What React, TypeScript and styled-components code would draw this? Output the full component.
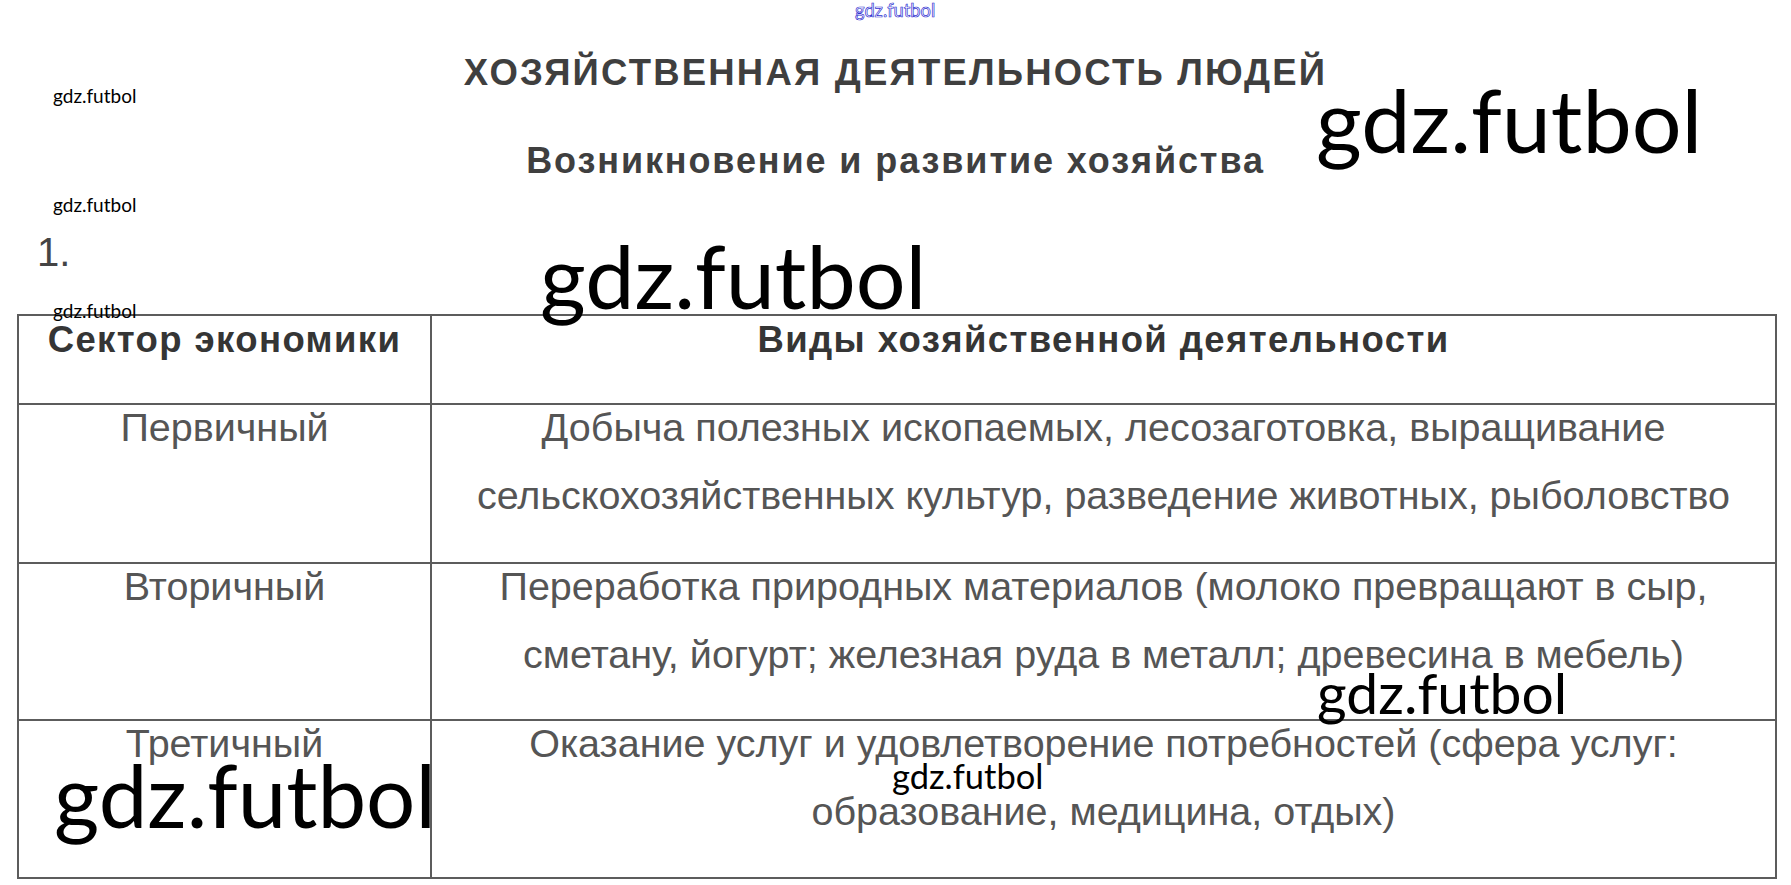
import React from 'react';
import styled, { createGlobalStyle } from 'styled-components';

const GlobalStyle = createGlobalStyle`
  body {
    margin: 0;
    background: #fff;
  }
`;

const Page = styled.div`
  position: relative;
  width: 1791px;
  height: 885px;
  overflow: hidden;
  background: #fff;
  font-family: "Liberation Sans", Arial, sans-serif;
  color: #4d4d4d;
`;

const Heading = styled.header`
  display: flex;
  flex-direction: column;
  align-items: center;
  padding-top: 55px;
`;

const Title = styled.h1`
  margin: 0;
  font-size: 36.5px;
  line-height: 36px;
  font-weight: 700;
  letter-spacing: 2.2px;
  color: #3f3f3f;
`;

const Subtitle = styled.h2`
  margin: 52px 0 0;
  font-size: 36px;
  line-height: 36px;
  font-weight: 700;
  letter-spacing: 1.9px;
  color: #3f3f3f;
`;

const TaskNumber = styled.div`
  margin: 54px 0 0 37px;
  font-size: 40px;
  line-height: 38px;
  color: #444;
`;

const Table = styled.table`
  margin: 43px 0 0 17px;
  width: 1760px;
  border-collapse: collapse;
  table-layout: fixed;
`;

const Row = styled.tr<{ $h: number }>`
  height: ${(p) => p.$h}px;
`;

const HeadCell = styled.th<{ $w?: number }>`
  ${(p) => (p.$w ? `width: ${p.$w}px;` : '')}
  border: 2px solid #5c5c5c;
  padding: 7px 6px 0;
  vertical-align: top;
  text-align: center;
  font-size: 36.5px;
  line-height: 34px;
  font-weight: 700;
  letter-spacing: 1.4px;
  color: #353535;
`;

const Cell = styled.td`
  border: 2px solid #5c5c5c;
  padding: 0 6px;
  vertical-align: top;
  text-align: center;
`;

const CellText = styled.p`
  margin: -12px 0 0;
  font-size: 39.5px;
  line-height: 68px;
  color: #555;
`;

const Mark = styled.span<{ $size: number; $x: number; $y: number }>`
  position: absolute;
  left: ${(p) => p.$x}px;
  top: ${(p) => p.$y}px;
  font-family: Lato, "Open Sans", sans-serif;
  font-size: ${(p) => p.$size}px;
  line-height: 1;
  color: #000;
  white-space: nowrap;
  pointer-events: none;
`;

const OutlineMark = styled(Mark)`
  color: #fff;
  -webkit-text-stroke: 0.7px #3232d2;
`;

const rows = [
  {
    sector: 'Первичный',
    kinds:
      'Добыча полезных ископаемых, лесозаготовка, выращивание сельскохозяйственных культур, разведение животных, рыболовство',
    h: 159,
  },
  {
    sector: 'Вторичный',
    kinds:
      'Переработка природных материалов (молоко превращают в сыр, сметану, йогурт; железная руда в металл; древесина в мебель)',
    h: 157,
  },
  {
    sector: 'Третичный',
    kinds:
      'Оказание услуг и удовлетворение потребностей (сфера услуг: образование, медицина, отдых)',
    h: 158,
  },
];

const marks = [
  { size: 19, x: 53, y: 86 },
  { size: 19, x: 53, y: 195 },
  { size: 19, x: 53, y: 301 },
  { size: 88, x: 1316, y: 75 },
  { size: 88, x: 540, y: 231 },
  { size: 87, x: 54, y: 751 },
  { size: 57, x: 1317, y: 664 },
  { size: 34.5, x: 892, y: 759 },
];

const App: React.FC = () => {
  return (
    <Page>
      <GlobalStyle />
      <Heading>
        <Title>ХОЗЯЙСТВЕННАЯ ДЕЯТЕЛЬНОСТЬ ЛЮДЕЙ</Title>
        <Subtitle>Возникновение и развитие хозяйства</Subtitle>
      </Heading>
      <TaskNumber>1.</TaskNumber>
      <Table>
        <tbody>
          <Row $h={89}>
            <HeadCell $w={399}>Сектор экономики</HeadCell>
            <HeadCell>Виды хозяйственной деятельности</HeadCell>
          </Row>
          {rows.map((r) => (
            <Row key={r.sector} $h={r.h}>
              <Cell>
                <CellText>{r.sector}</CellText>
              </Cell>
              <Cell>
                <CellText>{r.kinds}</CellText>
              </Cell>
            </Row>
          ))}
        </tbody>
      </Table>

      <OutlineMark $size={18.3} $x={855} $y={1}>
        gdz.futbol
      </OutlineMark>
      {marks.map((m, i) => (
        <Mark key={i} $size={m.size} $x={m.x} $y={m.y}>
          gdz.futbol
        </Mark>
      ))}
    </Page>
  );
};

export default App;
